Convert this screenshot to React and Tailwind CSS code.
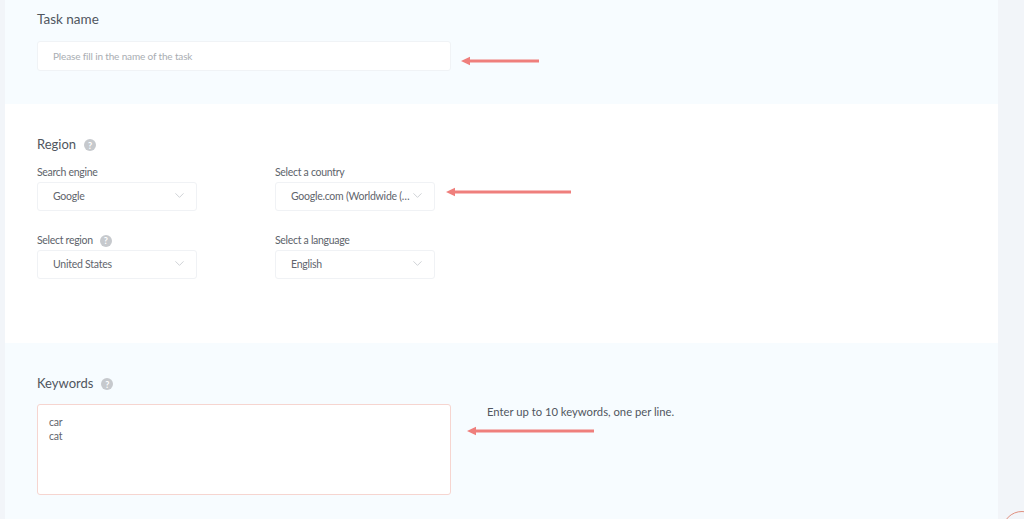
import React from 'react';
import { ChevronDown } from 'lucide-react';

const font = "font-['Lato','Liberation_Sans',sans-serif]";

const Arrow = ({ width, className }) => (
  <svg width={width} height="10" viewBox={`0 0 ${width} 10`} className={className}>
    <path d={`M0 5 L9 0.8 L9 3.5 L${width} 3.5 L${width} 6.5 L9 6.5 L9 9.2 Z`} fill="#ef7f7c" />
  </svg>
);

const Help = () => (
  <span className="flex h-3 w-3 items-center justify-center rounded-full bg-[#c6c9cd] text-[9px] leading-none font-bold text-white">?</span>
);

const Select = ({ value, label, help }) => (
  <div className="w-40">
    <div className="flex h-[20px] items-center gap-[7px] pt-[1px] text-[10.5px] tracking-[-0.3px] text-[#5d636b]">
      {label}
      {help && <Help />}
    </div>
    <div className="flex h-[29px] items-center justify-between rounded-[3px] border border-[#f0f2f5] bg-white pr-[9px] pl-[15px] text-[10.5px] tracking-[-0.25px] text-[#5f656d]">
      <span className="pt-[1px] whitespace-nowrap">{value}</span>
      <ChevronDown size={15} strokeWidth={1.3} className="mb-[2px] shrink-0 text-[#c4c7cc]" />
    </div>
  </div>
);

export default function App() {
  return (
    <div className={`${font} relative flex h-[519px] overflow-hidden bg-[#f2f5f9]`}>
      <main className="mr-[26px] ml-[5px] flex-1">
        <section className="h-[104px] bg-[#f7fcff] pt-[9px] pl-8">
          <h2 className="h-5 text-[13.5px] leading-5 text-[#50565e]">Task name</h2>
          <div className="mt-[12px] flex">
            <div className="flex h-[30px] w-[414px] items-center rounded-[3px] border border-[#f0f3f6] bg-white pt-[1px] pl-[15px] text-[10px] tracking-[-0.15px] text-[#a9adb2]">
              Please fill in the name of the task
            </div>
            <Arrow width={78} className="mt-[15px] ml-[10px]" />
          </div>
        </section>

        <section className="h-[239px] bg-white pt-[31px] pl-8">
          <div className="flex h-5 items-center gap-[8px] text-[13px] text-[#50565e]">
            Region
            <Help />
          </div>
          <div className="mt-[7px] flex">
            <Select label="Search engine" value="Google" />
            <div className="ml-[78px] flex">
              <Select label="Select a country" value="Google.com (Worldwide (…" />
              <Arrow width={125} className="mt-[25px] ml-[11px]" />
            </div>
          </div>
          <div className="mt-[19px] flex">
            <Select label="Select region" value="United States" help />
            <div className="ml-[78px]">
              <Select label="Select a language" value="English" />
            </div>
          </div>
        </section>

        <section className="h-[176px] bg-[#f7fcff] pt-[31px] pl-8">
          <div className="flex h-5 items-center gap-[8px] text-[13px] text-[#50565e]">
            Keywords
            <Help />
          </div>
          <div className="mt-[10px] flex">
            <div className="h-[91px] w-[414px] rounded-[3px] border border-[#f6d5d0] bg-white px-[11px] pt-[10px] text-[10.5px] leading-[14px] tracking-[-0.2px] text-[#5f656d]">
              <div>car</div>
              <div>cat</div>
            </div>
            <div className="ml-4">
              <p className="ml-5 text-[11.25px] leading-[15px] text-[#50565e]">Enter up to 10 keywords, one per line.</p>
              <Arrow width={127} className="mt-[7px]" />
            </div>
          </div>
        </section>
      </main>
      <div className="absolute top-[511px] left-[1002px] h-10 w-10 rounded-full border border-[#e0907f]" />
    </div>
  );
}
